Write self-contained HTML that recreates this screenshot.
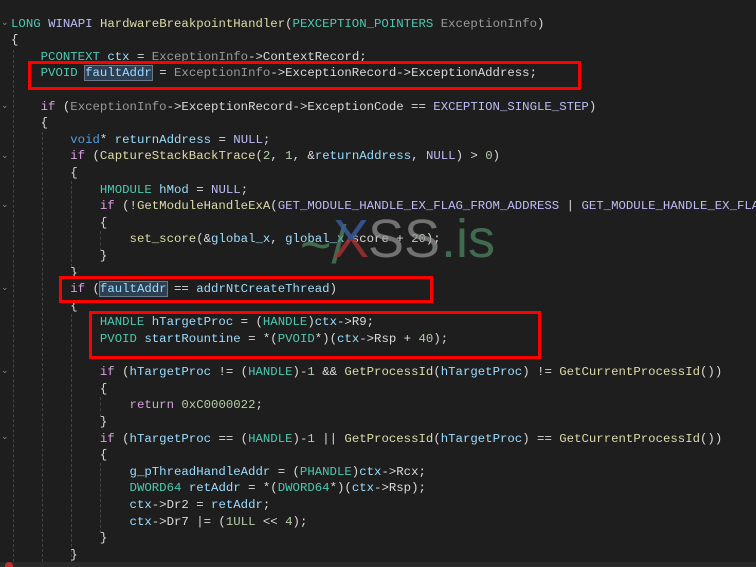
<!DOCTYPE html>
<html><head><meta charset="utf-8"><style>
html,body{margin:0;padding:0;background:#1e1e1e;width:756px;height:567px;overflow:hidden;position:relative}
pre{position:absolute;left:11px;top:15.7px;width:745px;overflow:hidden;margin:0;font-family:"Liberation Mono",monospace;font-size:12.35px;line-height:16.6px;color:#dadada;white-space:pre}
.t{color:#4ec9b0}.k{color:#569cd6}.c{color:#d8a0df}.f{color:#dcdcaa}.v{color:#9cdcfe}.p{color:#9a9a9a}.m{color:#bdbdf7}.n{color:#b5cea8}
.hl{background:#2d3f52;outline:1px solid #6a7a8a}
.box{position:absolute;border:3px solid #f00;box-sizing:border-box}
.g{position:absolute;width:0;border-left:1px dashed #444}
.fold{position:absolute;left:1px;color:#888;font-size:9px;font-family:"DejaVu Sans",sans-serif}
.wm{position:absolute;font-family:"Liberation Sans",sans-serif;font-size:54px;line-height:54px;top:212px}
</style></head><body>
<div class="g" style="left:13px;top:50px;height:517px"></div>
<div class="g" style="left:42px;top:132px;height:435px"></div>
<div class="g" style="left:71px;top:181px;height:86px"></div>
<div class="g" style="left:71px;top:314px;height:253px"></div>
<div class="g" style="left:100px;top:231px;height:20px"></div>
<div class="g" style="left:100px;top:397px;height:20px"></div>
<div class="g" style="left:100px;top:463px;height:70px"></div>
<div class="fold" style="top:18px">⌄</div>
<div class="fold" style="top:101px">⌄</div>
<div class="fold" style="top:151px">⌄</div>
<div class="fold" style="top:200px">⌄</div>
<div class="fold" style="top:283px">⌄</div>
<div class="fold" style="top:366px">⌄</div>
<div class="fold" style="top:432px">⌄</div>
<pre><span class="t">LONG</span> <span class="m">WINAPI</span> <span class="f">HardwareBreakpointHandler</span>(<span class="t">PEXCEPTION_POINTERS</span> <span class="p">ExceptionInfo</span>)
{
    <span class="t">PCONTEXT</span> <span class="v">ctx</span> = <span class="p">ExceptionInfo</span>-&gt;ContextRecord;
    <span class="t">PVOID</span> <span class="v hl">faultAddr</span> = <span class="p">ExceptionInfo</span>-&gt;ExceptionRecord-&gt;ExceptionAddress;

    <span class="c">if</span> (<span class="p">ExceptionInfo</span>-&gt;ExceptionRecord-&gt;ExceptionCode == <span class="m">EXCEPTION_SINGLE_STEP</span>)
    {
        <span class="k">void</span>* <span class="v">returnAddress</span> = <span class="m">NULL</span>;
        <span class="c">if</span> (<span class="f">CaptureStackBackTrace</span>(<span class="n">2</span>, <span class="n">1</span>, &amp;<span class="v">returnAddress</span>, <span class="m">NULL</span>) &gt; <span class="n">0</span>)
        {
            <span class="t">HMODULE</span> <span class="v">hMod</span> = <span class="m">NULL</span>;
            <span class="c">if</span> (!<span class="f">GetModuleHandleExA</span>(<span class="m">GET_MODULE_HANDLE_EX_FLAG_FROM_ADDRESS</span> | <span class="m">GET_MODULE_HANDLE_EX_FLAG_UNCHANGED_REFCOUNT</span>,
            {
                <span class="f">set_score</span>(&amp;<span class="v">global_x</span>, <span class="v">global_x</span>.score + <span class="n">20</span>);
            }
        }
        <span class="c">if</span> (<span class="v hl">faultAddr</span> == <span class="v">addrNtCreateThread</span>)
        {
            <span class="t">HANDLE</span> <span class="v">hTargetProc</span> = (<span class="t">HANDLE</span>)<span class="v">ctx</span>-&gt;R9;
            <span class="t">PVOID</span> <span class="v">startRountine</span> = *(<span class="t">PVOID</span>*)(<span class="v">ctx</span>-&gt;Rsp + <span class="n">40</span>);

            <span class="c">if</span> (<span class="v">hTargetProc</span> != (<span class="t">HANDLE</span>)-<span class="n">1</span> &amp;&amp; <span class="f">GetProcessId</span>(<span class="v">hTargetProc</span>) != <span class="f">GetCurrentProcessId</span>())
            {
                <span class="c">return</span> <span class="n">0xC0000022</span>;
            }
            <span class="c">if</span> (<span class="v">hTargetProc</span> == (<span class="t">HANDLE</span>)-<span class="n">1</span> || <span class="f">GetProcessId</span>(<span class="v">hTargetProc</span>) == <span class="f">GetCurrentProcessId</span>())
            {
                <span class="v">g_pThreadHandleAddr</span> = (<span class="t">PHANDLE</span>)<span class="v">ctx</span>-&gt;Rcx;
                <span class="t">DWORD64</span> <span class="v">retAddr</span> = *(<span class="t">DWORD64</span>*)(<span class="v">ctx</span>-&gt;Rsp);
                <span class="v">ctx</span>-&gt;Dr2 = <span class="v">retAddr</span>;
                <span class="v">ctx</span>-&gt;Dr7 |= (<span class="n">1ULL</span> &lt;&lt; <span class="n">4</span>);
            }
        }</pre>
<div class="box" style="left:28px;top:61px;width:553px;height:29px"></div>
<div class="box" style="left:59px;top:276px;width:374px;height:27px"></div>
<div class="box" style="left:89px;top:311px;width:452px;height:48px"></div>
<div class="wm" style="left:300px;top:218px;color:rgba(80,140,100,0.7)">~/</div>
<div class="wm" style="left:333px;background:linear-gradient(#3a5a9a 0%,#3a5a9a 50%,#a03030 50%);-webkit-background-clip:text;background-clip:text;color:transparent;opacity:.85">X</div>
<div class="wm" style="left:368px;color:rgba(150,150,150,0.7)">SS</div>
<div class="wm" style="left:441px;color:rgba(80,140,100,0.7)">.is</div>
<div style="position:absolute;left:0;top:562px;width:756px;height:5px;background:#2a2a2a"></div>
<div style="position:absolute;left:5px;top:562px;width:8px;height:5px;background:#c03030;border-radius:4px 4px 0 0"></div>
</body></html>
